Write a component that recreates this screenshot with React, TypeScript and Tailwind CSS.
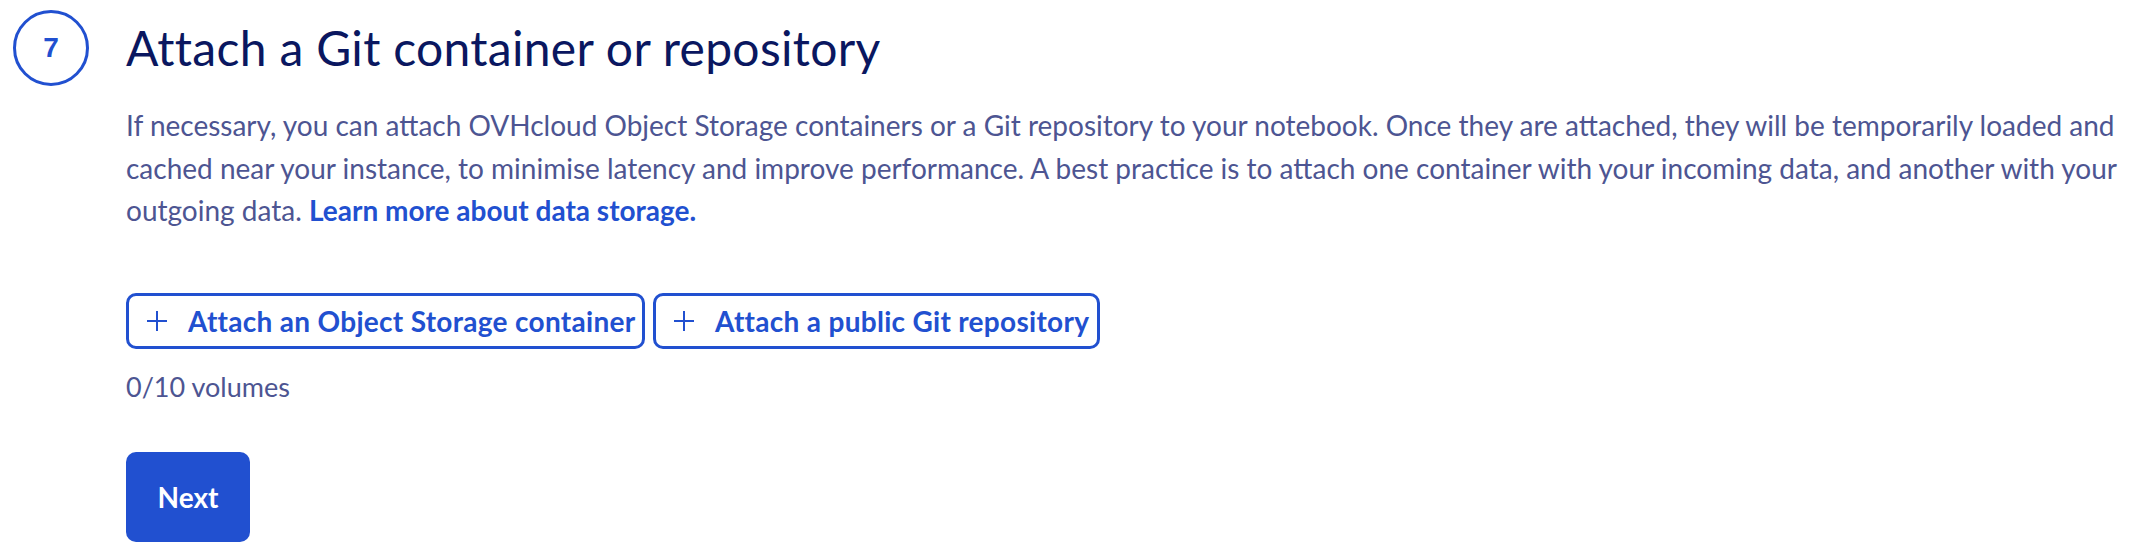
import React from "react";

const BLUE = "#2150d0";

function Plus() {
  return (
    <svg width="22" height="22" viewBox="0 0 22 22" fill="none" className="shrink-0">
      <path d="M11 1v20M1 11h20" stroke={BLUE} strokeWidth="2" />
    </svg>
  );
}

export default function App() {
  return (
    <div
      className="w-[2150px] h-[554px] bg-white overflow-hidden"
      style={{ fontFamily: "Lato, 'Open Sans', sans-serif" }}
    >
      <div className="flex pl-[13px] pt-[10px]">
        <div className="w-[76px] h-[76px] shrink-0 rounded-full border-[3px] border-[#2150d0] flex items-center justify-center text-[#2150d0] text-[28px] font-bold leading-none" style={{ fontFamily: "'Liberation Sans', Arial, sans-serif" }}>
          7
        </div>
        <div className="ml-[37px] flex flex-col">
          <h1 className="mt-[10px] text-[48px] leading-[56px] font-normal text-[#0a1760] whitespace-nowrap tracking-[0.3px]">
            Attach a Git container or repository
          </h1>
          <p className="mt-[28px] text-[28px] leading-[42.5px] text-[#4d5592] whitespace-nowrap">
            If necessary, you can attach OVHcloud Object Storage containers or a Git repository to your notebook. Once they are attached, they will be temporarily loaded and
            <br />
            cached near your instance, to minimise latency and improve performance. A best practice is to attach one container with your incoming data, and another with your
            <br />
            outgoing data.{" "}
            <a href="#" className="font-bold text-[#2150d0]">
              Learn more about data storage.
            </a>
          </p>
          <div className="mt-[61px] flex gap-[8px]">
            <button className="w-[519px] h-[56px] flex items-center pl-[17px] border-[3px] border-[#2150d0] rounded-[10px] text-[#2150d0] text-[28px] font-bold whitespace-nowrap tracking-[0.3px]">
              <Plus />
              <span className="ml-[20px]">Attach an Object Storage container</span>
            </button>
            <button className="w-[447px] h-[56px] flex items-center pl-[17px] border-[3px] border-[#2150d0] rounded-[10px] text-[#2150d0] text-[28px] font-bold whitespace-nowrap tracking-[0.3px]">
              <Plus />
              <span className="ml-[20px]">Attach a public Git repository</span>
            </button>
          </div>
          <div className="mt-[18px] text-[27px] leading-[40px] text-[#4d5592]">0/10 volumes</div>
          <div className="mt-[45px]">
            <button className="w-[124px] h-[90px] rounded-[10px] bg-[#2150d0] text-white text-[28px] font-bold flex items-center justify-center">
              Next
            </button>
          </div>
        </div>
      </div>
    </div>
  );
}
